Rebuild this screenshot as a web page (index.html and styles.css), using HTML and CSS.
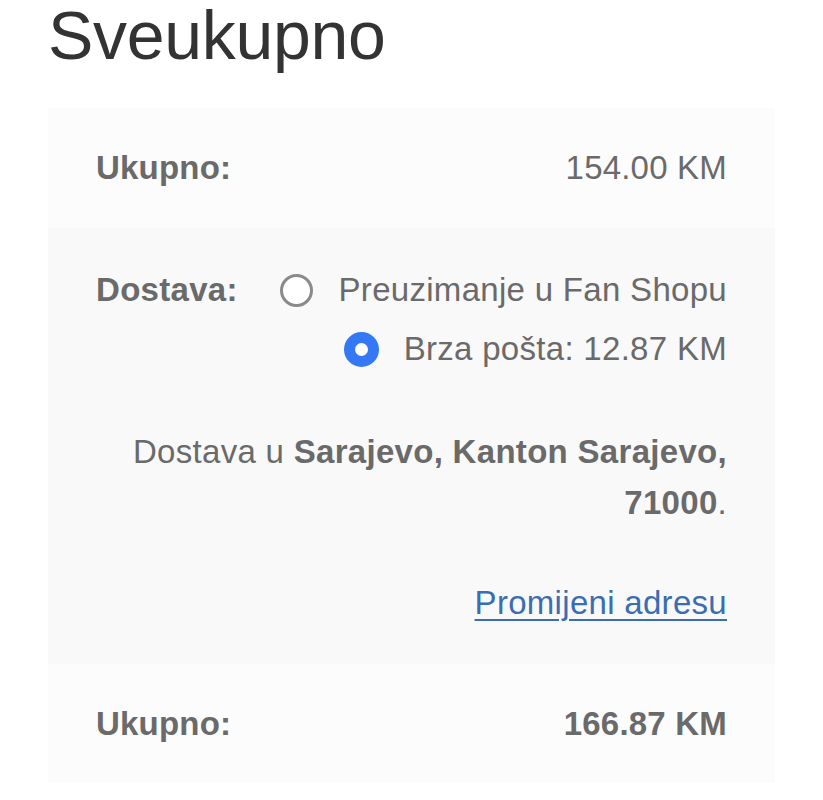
FILE: index.html
```html
<!DOCTYPE html>
<html lang="bs">
<head>
<meta charset="utf-8">
<title>Sveukupno</title>
<link rel="stylesheet" href="styles.css">
</head>
<body>
<div class="page">
  <h1 class="title">Sveukupno</h1>
  <div class="totals">
    <div class="row row-sub">
      <span class="label">Ukupno:</span>
      <span class="value">154.00 KM</span>
    </div>
    <div class="row-shipping">
      <div class="ship-top">
        <span class="label">Dostava:</span>
        <div class="options">
          <div class="option">
            <span class="radio"></span>
            <span class="opt-text">Preuzimanje u Fan Shopu</span>
          </div>
          <div class="option">
            <span class="radio radio-on"></span>
            <span class="opt-text">Brza pošta: 12.87 KM</span>
          </div>
        </div>
      </div>
      <p class="address">Dostava u <strong>Sarajevo, Kanton Sarajevo, 71000</strong>.</p>
      <div class="change"><a href="#" class="change-link">Promijeni adresu</a></div>
    </div>
    <div class="row row-total">
      <span class="label">Ukupno:</span>
      <span class="value value-bold">166.87 KM</span>
    </div>
  </div>
</div>
</body>
</html>
```

FILE: styles.css
```css
html, body {
  margin: 0;
  padding: 0;
  background: #ffffff;
}

body {
  font-family: "Liberation Sans", Arial, sans-serif;
  color: #6a6a6a;
}

.page {
  padding: 0 48px;
}

.title {
  margin: 0 0 40px 0;
  padding-top: 2px;
  font-size: 68px;
  line-height: 66px;
  font-weight: 400;
  color: #333333;
  letter-spacing: -0.3px;
}

.totals {
  width: 727px;
}

.row {
  display: flex;
  justify-content: space-between;
  align-items: center;
  padding: 35px 48px;
  font-size: 33px;
  line-height: 50px;
  letter-spacing: 0.2px;
}

.row-sub {
  background: #fcfcfc;
}

.row-total {
  background: #fcfcfc;
  padding: 35px 48px 34px;
}

.label {
  font-weight: 700;
  color: #6a6a6a;
}

.value {
  color: #6a6a6a;
}

.value-bold {
  font-weight: 700;
}

.row-shipping {
  background: #f9f9f9;
  padding: 37px 48px 36px;
  font-size: 33px;
  line-height: 50px;
  letter-spacing: 0.3px;
}

.ship-top {
  display: flex;
  justify-content: space-between;
  align-items: flex-start;
}

.options {
  display: flex;
  flex-direction: column;
  align-items: flex-end;
  gap: 9px;
}

.option {
  display: flex;
  align-items: center;
  gap: 26px;
}

.radio {
  width: 33px;
  height: 33px;
  box-sizing: border-box;
  border-radius: 50%;
  border: 3px solid #8a8a8a;
  background: #ffffff;
  flex: none;
}

.radio-on {
  width: 35px;
  height: 35px;
  border: 11px solid #3478f6;
  margin-right: -1px;
}

.address {
  margin: 52px 0 0 0;
  text-align: right;
  line-height: 51px;
}

.address strong {
  font-weight: 700;
}

.change {
  margin-top: 50px;
  text-align: right;
}

.change-link {
  color: #3a6db4;
  text-decoration: underline;
  text-underline-offset: 5px;
  text-decoration-thickness: 2px;
}
```
